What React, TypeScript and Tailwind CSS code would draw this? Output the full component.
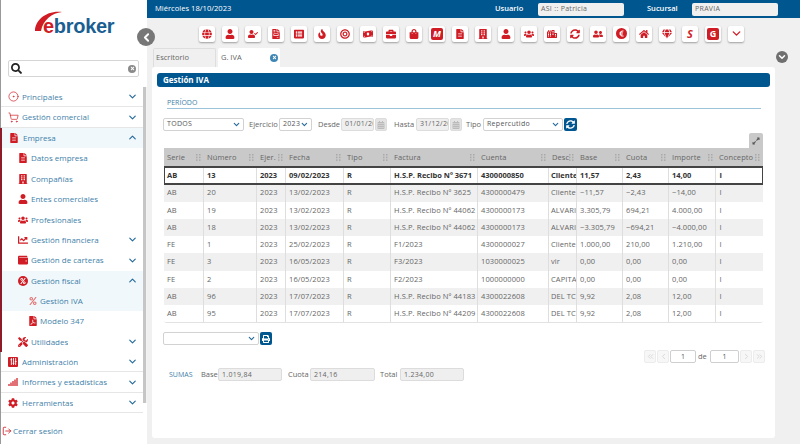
import { FC, ReactNode } from 'react';
import {
  FaGlobe, FaUser, FaUserCheck, FaFileInvoice, FaListAlt, FaFire, FaBullseye, FaMoneyBillWave,
  FaBriefcase, FaShoppingBag, FaFileAlt, FaBuilding, FaUsers, FaCity, FaSyncAlt, FaUserFriends,
  FaEuroSign, FaHome, FaGem, FaWallet, FaTools, FaSlidersH, FaSignal, FaCog, FaChartLine,
  FaPercent, FaFilePdf, FaPrint, FaExpandAlt, FaCalendarAlt, FaSearch, FaTimes,
} from 'react-icons/fa';
import {
  ChevronDown, ChevronUp, ChevronLeft, ChevronRight, ChevronsLeft, ChevronsRight, CircleDot, ShoppingCart, LogOut,
} from 'lucide-react';

const uiFont = "font-['Open_Sans','DejaVu_Sans',sans-serif]";

const toolbar: ReactNode[] = [
  <FaGlobe />, <FaUser />, <FaUserCheck />, <FaFileInvoice />, <FaListAlt />, <FaFire />, <FaBullseye />,
  <FaMoneyBillWave />, <FaBriefcase />, <FaShoppingBag />,
  <span className="flex h-[12px] w-[12px] items-center justify-center rounded-[2px] bg-[#d01c24] text-[9px] font-bold italic leading-none text-white">M</span>,
  <FaFileAlt />, <FaBuilding />, <FaUser />, <FaUsers />, <FaCity />, <FaSyncAlt />, <FaUserFriends />,
  <span className="flex h-[11px] w-[11px] items-center justify-center rounded-full bg-[#d01c24] text-[7px] text-white"><FaEuroSign /></span>,
  <FaHome />, <FaGem />,
  <span className="text-[11px] font-bold italic leading-none text-[#d01c24]">S</span>,
  <span className="flex h-[12px] w-[12px] items-center justify-center rounded-[2px] bg-[#d01c24] text-[9px] font-bold leading-none text-white">G</span>,
  <ChevronDown size={13} strokeWidth={2.5} />,
];

const columns = ['Serie', 'Número', 'Ejer.', 'Fecha', 'Tipo', 'Factura', 'Cuenta', 'Desc', 'Base', 'Cuota', 'Importe', 'Concepto'];

const rows = [
  ['AB', '13', '2023', '09/02/2023', 'R', 'H.S.P. Recibo Nº 3671', '4300000850', 'Cliente', '11,57', '2,43', '14,00', 'I'],
  ['AB', '20', '2023', '13/02/2023', 'R', 'H.S.P. Recibo Nº 3625', '4300000479', 'Cliente', '−11,57', '−2,43', '−14,00', 'I'],
  ['AB', '19', '2023', '13/02/2023', 'R', 'H.S.P. Recibo Nº 44062', '4300000173', 'ALVARI', '3.305,79', '694,21', '4.000,00', 'I'],
  ['AB', '18', '2023', '13/02/2023', 'R', 'H.S.P. Recibo Nº 44062', '4300000173', 'ALVARI', '−3.305,79', '−694,21', '−4.000,00', 'I'],
  ['FE', '1', '2023', '25/02/2023', 'R', 'F1/2023', '4300000027', 'Cliente', '1.000,00', '210,00', '1.210,00', 'I'],
  ['FE', '3', '2023', '16/05/2023', 'R', 'F3/2023', '1030000025', 'vir', '0,00', '0,00', '0,00', 'I'],
  ['FE', '2', '2023', '16/05/2023', 'R', 'F2/2023', '1000000000', 'CAPITA', '0,00', '0,00', '0,00', 'I'],
  ['AB', '96', '2023', '17/07/2023', 'R', 'H.S.P. Recibo Nº 44183', '4300022608', 'DEL TC', '9,92', '2,08', '12,00', 'I'],
  ['AB', '95', '2023', '17/07/2023', 'R', 'H.S.P. Recibo Nº 44209', '4300022608', 'DEL TC', '9,92', '2,08', '12,00', 'I'],
];

const gridCols = 'grid grid-cols-[40px_53px_29px_58px_47px_87px_71px_28px_46px_46px_47px_47px]';

const Grip = () => (
  <svg width="5" height="7" viewBox="0 0 5 7" className="ml-auto shrink-0" fill="#a9a9a9">
    <rect x="0" y="0" width="1.5" height="1.5" /><rect x="3" y="0" width="1.5" height="1.5" />
    <rect x="0" y="2.7" width="1.5" height="1.5" /><rect x="3" y="2.7" width="1.5" height="1.5" />
    <rect x="0" y="5.4" width="1.5" height="1.5" /><rect x="3" y="5.4" width="1.5" height="1.5" />
  </svg>
);

interface MenuRowProps {
  icon: ReactNode;
  label: string;
  indent?: number;
  chevron?: 'down' | 'up';
  active?: boolean;
  divider?: boolean;
}

const MenuRow: FC<MenuRowProps> = ({ icon, label, indent = 0, chevron, active, divider }) => (
  <div className={`flex h-[20.4px] items-center pr-[5px] ${active ? 'bg-[#f0f8fb]' : ''} ${divider ? 'border-b border-[#e6e6e6]' : ''}`}>
    <span className={`flex w-[14px] shrink-0 items-center justify-center text-[10px] text-[#d01c24] ${indent === 2 ? 'ml-[24px]' : indent === 1 ? 'ml-[14px]' : 'ml-[5px]'}`}>{icon}</span>
    <span className={`truncate text-[8px] text-[#3f7fa9] ${indent === 2 ? 'ml-0' : indent === 1 ? 'ml-px' : 'ml-[2px]'}`}>{label}</span>
    {chevron === 'down' && <ChevronDown size={11} strokeWidth={2.5} className="ml-auto shrink-0 text-[#23699b]" />}
    {chevron === 'up' && <ChevronUp size={11} strokeWidth={2.5} className="ml-auto shrink-0 text-[#23699b]" />}
  </div>
);

const Sidebar = () => (
  <aside className="flex h-full w-[147px] shrink-0 flex-col border-l border-[#999] bg-white">
    <div className="relative h-[60px] shrink-0">
      <svg width="50" height="30" viewBox="0 0 50 30" className="absolute left-[32px] top-[9px]">
        <path d="M2 22 C2 11 14 1 29 3 C19 4 10 11 8 22 Z" fill="#d01c24" />
      </svg>
      <span className="absolute left-[42px] top-[14px] font-['Liberation_Sans',sans-serif] text-[20px] font-bold leading-[24px] tracking-[-0.3px] text-[#1b5f92]">
        <span className="text-[#d01c24]">e</span>broker
      </span>
    </div>
    <div className="ml-[7px] mr-[8px] flex h-[17px] shrink-0 items-center rounded-[2px] border border-[#d5d5d5] px-[2px]">
      <FaSearch className="text-[11px] text-[#222]" />
      <span className="ml-auto flex h-[8px] w-[8px] items-center justify-center rounded-full bg-[#8a8a8a] text-[5px] text-white"><FaTimes /></span>
    </div>
    <div className="mt-[10px] flex h-[316px] shrink-0">
      <div className="w-[142px]">
        <MenuRow icon={<CircleDot size={11} strokeWidth={1.5} />} label="Principales" chevron="down" divider />
        <MenuRow icon={<ShoppingCart size={11} strokeWidth={1.5} />} label="Gestión comercial" chevron="down" divider />
        <div className="-ml-px border-l-2 border-[#8e1b2a]">
          <MenuRow icon={<FaFileAlt />} label="Empresa" chevron="up" active />
          <MenuRow icon={<FaFileAlt />} label="Datos empresa" indent={1} />
          <MenuRow icon={<FaBuilding />} label="Compañías" indent={1} />
          <MenuRow icon={<FaUser />} label="Entes comerciales" indent={1} />
          <MenuRow icon={<FaUsers />} label="Profesionales" indent={1} />
          <MenuRow icon={<FaChartLine />} label="Gestión financiera" indent={1} chevron="down" />
          <MenuRow icon={<FaWallet />} label="Gestión de carteras" indent={1} chevron="down" />
          <MenuRow
            icon={<span className="flex h-[10px] w-[10px] items-center justify-center rounded-full bg-[#d01c24] text-[6px] text-white"><FaPercent /></span>}
            label="Gestión fiscal" indent={1} chevron="up" active
          />
          <MenuRow icon={<FaPercent className="text-[8px] text-[#e2706f]" />} label="Gestión IVA" indent={2} active />
          <MenuRow icon={<FaFilePdf />} label="Modelo 347" indent={2} />
          <MenuRow icon={<FaTools />} label="Utilidades" indent={1} chevron="down" />
        </div>
        <MenuRow
          icon={<span className="flex h-[10px] w-[10px] items-center justify-center rounded-[1px] bg-[#d01c24] text-[7px] text-white"><FaSlidersH className="rotate-90" /></span>}
          label="Administración" chevron="down" divider
        />
        <MenuRow icon={<FaSignal />} label="Informes y estadísticas" chevron="down" divider />
        <MenuRow icon={<FaCog />} label="Herramientas" chevron="down" divider />
      </div>
      <div className="w-[4px] bg-[#f2f2f2]"><div className="h-[316px] w-[3px] bg-[#c6c6c6]" /></div>
    </div>
    <div className="mt-[22px] flex items-center pl-[1px]">
      <LogOut size={10} className="text-[#d01c24]" />
      <span className="ml-[1px] text-[8px] text-[#3f7fa9]">Cerrar sesión</span>
    </div>
  </aside>
);

const Select: FC<{ value?: string; className: string }> = ({ value, className }) => (
  <div className={`flex h-[13px] shrink-0 items-center rounded-[2px] border border-[#d2d2d2] bg-white pl-[3px] pr-[2px] text-[7px] tracking-[0.3px] text-[#555] ${className}`}>
    <span>{value}</span>
    <ChevronDown size={9} strokeWidth={3} className="ml-auto text-[#23699b]" />
  </div>
);

const DateField: FC<{ value: string }> = ({ value }) => (
  <>
    <div className="flex h-[13px] w-[33px] shrink-0 items-center overflow-hidden whitespace-nowrap rounded-[2px] border border-[#dcdcdc] bg-[#efefef] pl-[3px] text-[7px] tracking-[0.3px] text-[#666]">{value}</div>
    <div className="ml-px flex h-[13px] w-[12px] shrink-0 items-center justify-center rounded-[2px] border border-[#dcdcdc] bg-[#e4e4e4] text-[8px] text-[#bbb]"><FaCalendarAlt /></div>
  </>
);

const Label: FC<{ children: ReactNode; className?: string }> = ({ children, className = '' }) => (
  <span className={`shrink-0 whitespace-nowrap text-[7.5px] text-[#666] ${className}`}>{children}</span>
);

const PageButton: FC<{ children: ReactNode }> = ({ children }) => (
  <div className="flex h-[13px] w-[12px] items-center justify-center rounded-[2px] border border-[#ececec] bg-[#f7f7f7] text-[#cfcfcf]">{children}</div>
);

const Total: FC<{ value: string; className: string }> = ({ value, className }) => (
  <div className={`flex h-[13px] shrink-0 items-center rounded-[2px] border border-[#dcdcdc] bg-[#efefef] pl-[3px] text-[7px] tracking-[0.3px] text-[#666] ${className}`}>{value}</div>
);

const GestionIva = () => (
  <section className="relative ml-[5px] mr-[25px] h-[371px] rounded-[3px] bg-white pt-[6px]">
    <div className="mx-[5px] flex h-[14px] items-center rounded-[3px] bg-[#00568f] pl-[6px] text-[8px] font-bold text-white">Gestión IVA</div>
    <div className="ml-[15px] mr-[14px] mt-[10px] h-[12px] border-b border-[#9cc3dc] text-[7px] leading-[12px] text-[#3f7fa9]">PERÍODO</div>
    <div className="ml-[11px] mt-[9px] flex h-[13px] items-center">
      <Select value="TODOS" className="w-[81px]" />
      <Label className="ml-[5px] w-[28px]">Ejercicio</Label>
      <Select value="2023" className="ml-[2px] w-[33px]" />
      <Label className="ml-[6px] w-[20px]">Desde</Label>
      <div className="ml-[3px] flex"><DateField value="01/01/2023" /></div>
      <Label className="ml-[7px] w-[19px]">Hasta</Label>
      <div className="ml-[3px] flex"><DateField value="31/12/2023" /></div>
      <Label className="ml-[4px] w-[15px]">Tipo</Label>
      <Select value="Repercutido" className="ml-[2px] w-[80px]" />
      <div className="ml-px flex h-[13px] w-[13px] items-center justify-center rounded-[2px] bg-[#00568f] text-[9px] text-white"><FaSyncAlt /></div>
    </div>
    <div className="ml-[597px] mt-[2px] flex h-[15px] w-[14px] items-center justify-center rounded-t-[2px] bg-[#c9c9c9] text-[8px] text-[#555]"><FaExpandAlt /></div>
    <div className="ml-[12px] w-[599px] overflow-hidden rounded-b-[3px] border-b border-[#e2e2e2]">
      <div className={`${gridCols} h-[19px] items-center bg-[#c9c9c9] text-[7.5px] tracking-[0.1px] text-[#666]`}>
        {columns.map((c) => (
          <div key={c} className="flex items-center justify-between overflow-hidden pl-[3px] pr-[3px]">
            <span>{c}</span>
            <Grip />
          </div>
        ))}
      </div>
      {rows.map((row, i) => (
        <div
          key={i}
          className={`${gridCols} h-[17.25px] items-stretch text-[7.5px] ${i === 0 ? 'font-bold text-[#333] outline-2 -outline-offset-1 outline-[#444]' : 'tracking-[0.1px] text-[#666]'} ${i % 2 === 1 ? 'bg-[#f0f0f0]' : 'bg-white'}`}
        >
          {row.map((cell, j) => (
            <div key={j} className={`flex items-center overflow-hidden whitespace-nowrap ${j === 7 ? 'pl-[2px]' : j === 11 ? 'pl-[3.4px]' : 'pl-[3px]'} ${j < 11 ? 'border-r border-[#dedede]' : ''}`}>{cell}</div>
          ))}
        </div>
      ))}
    </div>
    <div className="ml-[11px] mt-[9px] flex h-[13px] items-center">
      <Select className="w-[96px]" />
      <div className="ml-px flex h-[13px] w-[12px] items-center justify-center rounded-[2px] bg-[#00568f] text-[8px] text-white"><FaPrint /></div>
    </div>
    <div className="ml-[492px] mt-[5px] flex h-[13px] items-center gap-px">
      <PageButton><ChevronsLeft size={9} /></PageButton>
      <PageButton><ChevronLeft size={9} /></PageButton>
      <div className="flex h-[13px] w-[26px] items-center justify-center rounded-[2px] border border-[#cfcfcf] text-[7px] text-[#555]">1</div>
      <span className="ml-px mr-[3px] w-[8px] whitespace-nowrap text-[7.5px] text-[#666]">de</span>
      <div className="flex h-[13px] w-[29px] items-center justify-center rounded-[2px] border border-[#cfcfcf] text-[7px] text-[#555]">1</div>
      <PageButton><ChevronRight size={9} /></PageButton>
      <PageButton><ChevronsRight size={9} /></PageButton>
    </div>
    <div className="ml-[17px] mt-[5px] flex h-[13px] items-center">
      <span className="w-[23px] text-[7px] text-[#3f7fa9]">SUMAS</span>
      <Label className="ml-[9px] w-[15px]">Base</Label>
      <Total value="1.019,84" className="ml-[2px] w-[64px]" />
      <Label className="ml-[6px] w-[19px]">Cuota</Label>
      <Total value="214,16" className="ml-[3px] w-[65px]" />
      <Label className="ml-[5px] w-[17px]">Total</Label>
      <Total value="1.234,00" className="ml-[3px] w-[64px]" />
    </div>
  </section>
);

export default function App() {
  return (
    <div className={`relative flex h-[444px] w-[800px] overflow-hidden bg-[#f0f0f0] ${uiFont}`}>
      <Sidebar />
      <main className="flex min-w-0 flex-1 flex-col">
        <header className="flex h-[18px] shrink-0 items-center bg-[#00568f] text-white">
          <span className="ml-[8px] w-[76px] whitespace-nowrap text-[7.6px]">Miércoles 18/10/2023</span>
          <span className="ml-[264px] w-[25px] text-[7.5px] font-semibold">Usuario</span>
          <div className="ml-[18px] flex h-[13px] w-[86px] items-center rounded-[2px] bg-[#f0f0f0] pl-[3px] text-[7px] tracking-[0.3px] text-[#666]">ASI :: Patricia</div>
          <span className="ml-[23px] w-[28px] text-[7.5px] font-semibold">Sucursal</span>
          <div className="ml-[17px] flex h-[13px] w-[86px] items-center rounded-[2px] bg-[#f0f0f0] pl-[3px] text-[7px] tracking-[0.3px] text-[#666]">PRAVIA</div>
        </header>
        <div className="flex h-[30px] shrink-0 items-center gap-[7px] pl-[52px] pt-[1px]">
          {toolbar.map((icon, i) => (
            <div key={i} className="flex h-[16px] w-[16px] items-center justify-center rounded-[2px] bg-white text-[10px] text-[#d01c24] shadow-[0_1px_2px_rgba(0,0,0,0.35)]">
              {icon}
            </div>
          ))}
        </div>
        <div className="flex h-[19px] shrink-0 items-stretch pl-[6px] text-[7.5px] text-[#666]">
          <div className="flex w-[63px] items-center rounded-t-[2px] border border-b-0 border-[#dedede] pl-[2px]">Escritorio</div>
          <div className="ml-[2px] flex w-[62px] items-center rounded-t-[2px] bg-white pl-[3px]">
            G. IVA
            <span className="ml-auto mr-[2px] flex h-[8px] w-[8px] items-center justify-center rounded-full bg-[#3f86b5] text-[5px] text-white"><FaTimes /></span>
          </div>
        </div>
        <GestionIva />
      </main>
      <div className="absolute left-[137px] top-[28px] flex h-[18px] w-[18px] items-center justify-center rounded-full bg-[#777] text-white">
        <ChevronLeft size={13} strokeWidth={3.5} />
      </div>
      <div className="absolute left-[776px] top-[51px] flex h-[12px] w-[12px] items-center justify-center rounded-full bg-[#6f6f6f] text-white">
        <ChevronDown size={10} strokeWidth={3.5} />
      </div>
    </div>
  );
}
